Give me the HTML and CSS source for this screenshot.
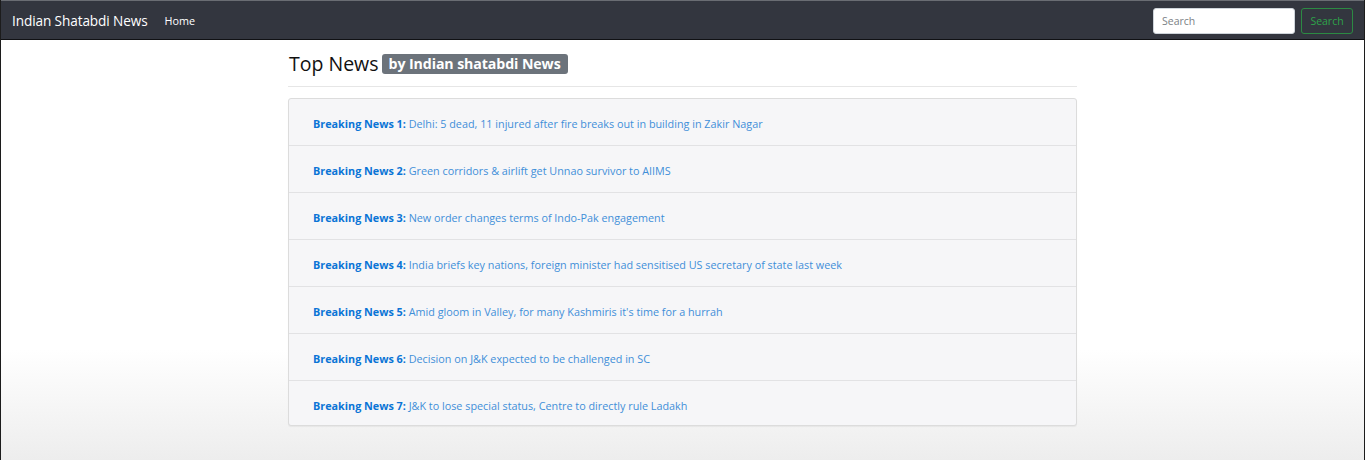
FILE: index.html
```html
<!DOCTYPE html>
<html lang="en">
<head>
<meta charset="utf-8">
<title>Indian Shatabdi News</title>
<link rel="stylesheet" href="styles.css">
</head>
<body>
<nav class="navbar">
  <div class="nav-left">
    <a class="brand" href="#">Indian Shatabdi News</a>
    <a class="nav-link" href="#">Home</a>
  </div>
  <form class="search">
    <input class="search-input" type="text" placeholder="Search">
    <button class="search-btn" type="button">Search</button>
  </form>
</nav>
<main class="container">
  <h1 class="title">Top News <span class="badge">by Indian shatabdi News</span></h1>
  <hr class="rule">
  <ul class="news-list">
    <li class="news-item"><b>Breaking News 1:</b> Delhi: 5 dead, 11 injured after fire breaks out in building in Zakir Nagar</li>
    <li class="news-item"><b>Breaking News 2:</b> Green corridors &amp; airlift get Unnao survivor to AIIMS</li>
    <li class="news-item"><b>Breaking News 3:</b> New order changes terms of Indo-Pak engagement</li>
    <li class="news-item"><b>Breaking News 4:</b> India briefs key nations, foreign minister had sensitised US secretary of state last week</li>
    <li class="news-item"><b>Breaking News 5:</b> Amid gloom in Valley, for many Kashmiris it's time for a hurrah</li>
    <li class="news-item"><b>Breaking News 6:</b> Decision on J&amp;K expected to be challenged in SC</li>
    <li class="news-item"><b>Breaking News 7:</b> J&amp;K to lose special status, Centre to directly rule Ladakh</li>
  </ul>
</main>
</body>
</html>
```
FILE: styles.css
```css
html, body {
  margin: 0;
  padding: 0;
}
body {
  font-family: "Open Sans", "Noto Sans", sans-serif;
  height: 460px;
  background: linear-gradient(to bottom, #ffffff 0, #ffffff 350px, #ededed 460px);
  border-left: 1px solid #1c1c1c;
  border-right: 1px solid #1c1c1c;
  box-sizing: border-box;
  overflow: hidden;
}
.navbar {
  height: 40px;
  background: #33363f;
  border-top: 1px solid #6a6d73;
  border-bottom: 1px solid #101114;
  box-sizing: border-box;
  display: flex;
  align-items: center;
  justify-content: space-between;
  padding: 0 11px 0 11px;
}
.nav-left {
  display: flex;
  align-items: center;
  gap: 17px;
}
.brand {
  color: #ffffff;
  font-size: 13.6px;
  text-decoration: none;
  letter-spacing: -0.1px;
}
.nav-link {
  color: #ffffff;
  font-size: 10.8px;
  text-decoration: none;
}
.search {
  display: flex;
  align-items: center;
  gap: 6px;
  margin-top: 2px;
}
.search-input {
  width: 142px;
  height: 26px;
  box-sizing: border-box;
  border: 1px solid #ced4da;
  border-radius: 3px;
  padding: 0 8px;
  font-family: inherit;
  font-size: 10.5px;
  background: #fff;
}
.search-input::placeholder {
  color: #7b7f85;
}
.search-btn {
  width: 52px;
  height: 26px;
  box-sizing: border-box;
  border: 1px solid #2c8a43;
  border-radius: 3px;
  background: transparent;
  color: #2ea34a;
  font-family: inherit;
  font-size: 10.5px;
  padding: 0;
}
.container {
  width: 789px;
  margin: 0 0 0 287px;
  padding-top: 11px;
}
.title {
  margin: 0;
  font-weight: 400;
  font-size: 19.5px;
  color: #111;
  display: flex;
  align-items: center;
  gap: 3px;
  height: 24px;
  padding-left: 1px;
}
.badge {
  background: #6c737b;
  color: #fff;
  font-weight: 700;
  font-size: 14.2px;
  border-radius: 3px;
  padding: 0 7px;
  height: 20px;
  line-height: 20px;
  margin-top: 2px;
  letter-spacing: -0.1px;
}
.rule {
  border: 0;
  border-top: 1px solid #e6e6e6;
  margin: 11px 0 11px;
}
.news-list {
  list-style: none;
  margin: 0;
  padding: 0;
  border: 1px solid #dcdcdc;
  border-radius: 3px;
  background: #f6f6f8;
  box-shadow: 0 1px 1px rgba(0,0,0,0.05);
}
.news-item {
  height: 47px;
  box-sizing: border-box;
  line-height: 46px;
  padding-top: 2px;
  padding-left: 24px;
  font-size: 10.8px;
  color: #3f8fd8;
  border-top: 1px solid #e2e2e4;
  white-space: nowrap;
}
.news-item:first-child {
  border-top: 0;
  height: 46px;
}
.news-item:last-child {
  height: 45px;
}
.news-item b {
  color: #0a74d6;
  font-weight: 700;
}
```
